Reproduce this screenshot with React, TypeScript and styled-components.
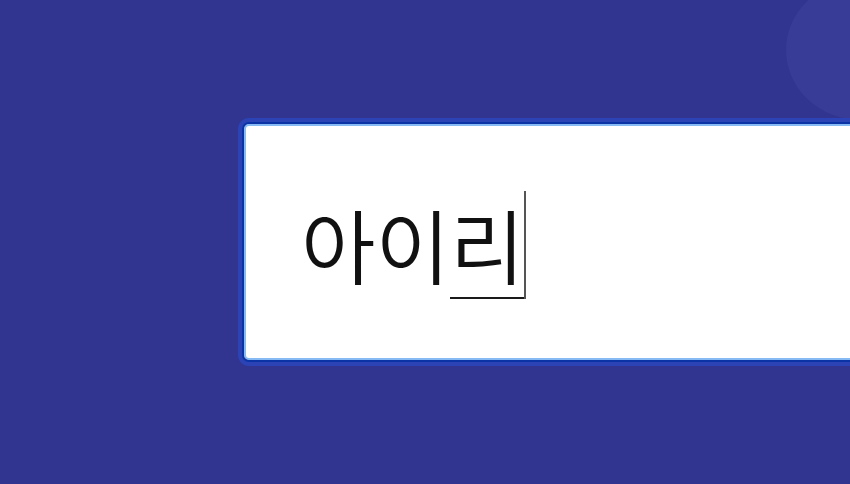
import React from "react";
import styled, { createGlobalStyle } from "styled-components";

const GlobalStyle = createGlobalStyle`
  html, body {
    margin: 0;
    padding: 0;
    background: #32358f;
  }
`;

const Page = styled.div`
  position: relative;
  width: 850px;
  height: 484px;
  overflow: hidden;
  background: #32358f;
  padding: 118px 0 0 238px;
  box-sizing: border-box;
`;

const Glow = styled.div`
  position: absolute;
  top: -20px;
  left: 786px;
  width: 150px;
  height: 140px;
  border-radius: 50%;
  background: #383c97;
`;

const Field = styled.div`
  position: relative;
  width: 720px;
  height: 248px;
  box-sizing: border-box;
  padding: 4px;
  border-radius: 11px;
  background: #2b43b4;
`;

const Inner = styled.div`
  height: 100%;
  box-sizing: border-box;
  border: 2px solid #0b33a6;
  border-radius: 7px;
  box-shadow: inset 0 0 0 2px #86baf4;
  background: #ffffff;
  display: flex;
  align-items: center;
  padding: 0 0 0 57px;
`;

const Text = styled.div`
  font-family: "Noto Sans CJK KR", "Noto Sans", sans-serif;
  font-weight: 350;
  font-size: 81px;
  line-height: 1;
  height: 81px;
  color: #111;
  display: flex;
  align-items: flex-end;
`;

const Composing = styled.span`
  display: inline-block;
  border-bottom: 2px solid #1a1a1a;
  padding-bottom: 14px;
  margin-bottom: -16px;
`;

const Caret = styled.span`
  display: inline-block;
  flex: none;
  width: 2px;
  height: 108px;
  background: #555;
  margin-left: -1px;
  margin-bottom: -16px;
`;

export default function App() {
  return (
    <>
      <GlobalStyle />
      <Page>
        <Glow />
        <Field>
          <Inner>
            <Text>
              <span>아이</span>
              <Composing>리</Composing>
              <Caret />
            </Text>
          </Inner>
        </Field>
      </Page>
    </>
  );
}
